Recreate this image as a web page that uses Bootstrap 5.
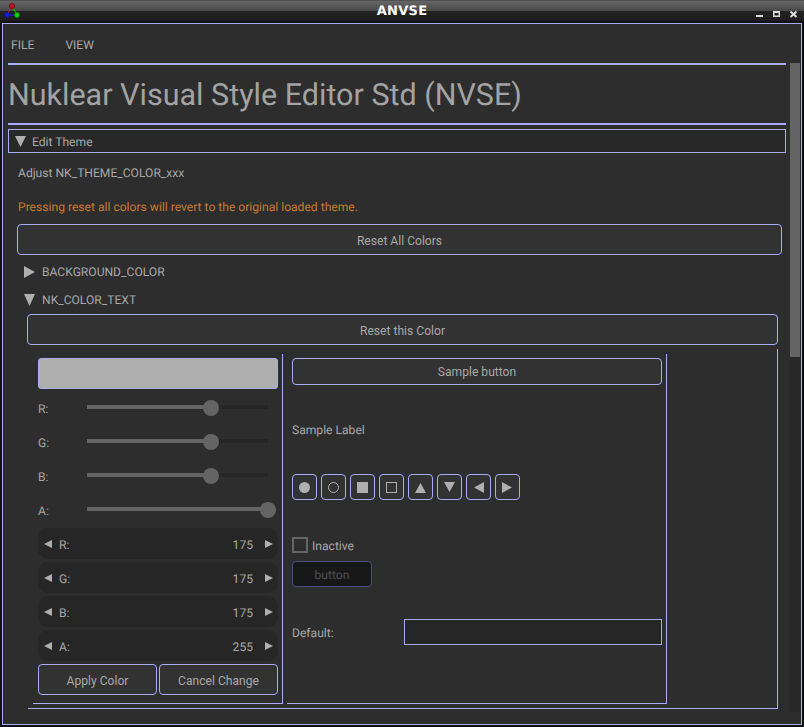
<!DOCTYPE html>
<html lang="en">
<head>
  <meta charset="UTF-8" />
  <title>ANVSE</title>
  <link href="https://cdn.jsdelivr.net/npm/bootstrap@5.3.0/dist/css/bootstrap.min.css" rel="stylesheet">
  <style>
    html, body { height: 100%; overflow: hidden; }
    body {
      background: #111;
      color: #a8a8a8;
      font-family: Roboto, "Liberation Sans", sans-serif;
      font-size: 12.1px;
      line-height: 14px;
      text-rendering: geometricPrecision;
    }
    .title-bar {
      height: 21px;
      background: linear-gradient(#3c3c3c 0, #666 1px, #484848 11px, #232323 11px, #1c1c1c 21px);
      margin-bottom: 2px;
    }
    .title-side { flex: 1 1 0; }
    .title-text {
      font-family: "DejaVu Sans", sans-serif;
      font-weight: 700;
      font-size: 13px;
      color: #fff;
      letter-spacing: .3px;
      padding-top: 2px;
    }
    .win-btns { margin-right: 7px; gap: 9px; padding-top: 7px; }
    .app-win {
      width: 800px;
      height: 702px;
      margin-left: 2px;
      border: 1px solid #aaf;
      background: #2d2d2d;
      padding-left: 5px;
    }
    .app-main { width: 778px; }
    .app-scroll {
      width: 10px;
      height: 649px;
      margin: 39px 0 0 4px;
      background: #282828;
    }
    .scroll-thumb { height: 294px; background: #646464; }
    .menu-row { height: 39px; padding: 3px 0 0 3px; gap: 31px; }
    .heavy-rule { height: 2px; background: #aaf; }
    .big-title {
      height: 58px;
      margin: 0;
      padding: 2px 0 0 0;
      font-size: 30.5px;
      font-weight: 400;
      line-height: 58px;
      color: #a3a3a3;
    }
    .tree-head {
      height: 24px;
      margin-top: 4px;
      padding-left: 6px;
      gap: 6px;
      border: 1px solid #aaf;
      background: #282828;
    }
    .line-20 { height: 20px; }
    .adjust-line { margin: 10px 0 14px 10px; }
    .warn-line { margin-left: 10px; color: #c87a32; }
    .nudge { padding-top: 2px; }
    .nk-btn {
      background: #323232;
      border: 1px solid #aaf;
      border-radius: 4px;
      color: #a8a8a8;
      font-size: 12.1px;
      line-height: 14px;
      padding: 2px 0 0;
      --bs-btn-hover-bg: #323232;
      --bs-btn-hover-color: #a8a8a8;
      --bs-btn-hover-border-color: #aaf;
    }
    .reset-all { height: 31px; width: 765px; margin: 7px 0 0 9px; }
    .tree-sub { margin-left: 16px; gap: 7px; }
    .sub-first { margin-top: 7px; }
    .sub-next { margin-top: 8px; }
    .reset-one { height: 31px; width: 751px; margin: 4px 0 0 19px; }
    .color-group {
      width: 750px;
      height: 360px;
      margin: 4px 0 0 20px;
      padding: 5px 0 0 5px;
      border-right: 1px solid #aaf;
      border-bottom: 1px solid #aaf;
    }
    .side-panel {
      height: 350px;
      padding: 4px 0 0 5px;
      border-right: 1px solid #aaf;
      border-bottom: 1px solid #aaf;
    }
    .picker-panel { width: 250px; margin-right: 4px; }
    .sample-panel { width: 380px; }
    .swatch {
      width: 240px;
      height: 31px;
      margin-bottom: 3px;
      background: #afafaf;
      border: 1px solid #aaf;
      border-radius: 3px;
    }
    .slider-row { width: 240px; height: 34px; }
    .slider-name { width: 49px; }
    .slider-track {
      position: relative;
      width: 181px;
      height: 4px;
      margin-top: -4px;
      background: #262626;
    }
    .slider-fill { height: 4px; background: #646464; }
    .slider-thumb {
      position: absolute;
      top: -5px;
      width: 16px;
      height: 16px;
      margin-left: -8px;
      border-radius: 50%;
      background: #646464;
    }
    .prop-list { width: 240px; gap: 3px; }
    .prop-row {
      height: 31px;
      padding: 0 5px 0 6px;
      background: #262626;
      border-radius: 10px;
    }
    .prop-name { margin-left: 7px; }
    .prop-value { margin-right: 12px; }
    .picker-actions { width: 240px; gap: 2px; margin-top: 3px; }
    .picker-actions .nk-btn { width: 119px; height: 31px; }
    .sample-btn { width: 370px; height: 27px; padding-top: 1px; }
    .sample-label { height: 20px; margin: 35px 0 34px; }
    .sym-row { gap: 4px; }
    .sym-btn { width: 25px; height: 26px; padding: 0; }
    .inactive-row { margin-top: 37px; gap: 4px; }
    .fake-check { width: 16px; height: 16px; border: 2px solid #646464; }
    .off-btn {
      width: 80px;
      height: 26px;
      margin-top: 8px;
      padding-top: 2px;
      background: #181818;
      border: 1px solid #4d4d80;
      border-radius: 4px;
      color: #505050;
    }
    .default-row { margin-top: 32px; }
    .default-name { width: 112px; }
    .default-input {
      width: 258px;
      height: 26px;
      background: #262626;
      border: 1px solid #aaf;
    }
    svg { display: block; flex: none; }
  </style>
</head>
<body>
  <div class="title-bar d-flex align-items-center">
    <div class="title-side d-flex align-items-center">
      <svg width="24" height="21" viewBox="0 0 24 21">
        <line x1="12" y1="6" x2="17" y2="15" stroke="#0c0"/>
        <line x1="7" y1="15" x2="17" y2="15" stroke="#22f"/>
        <line x1="12" y1="6" x2="7" y2="15" stroke="#d22"/>
        <circle cx="12" cy="6" r="2.5" fill="#c12" stroke="#611"/>
        <circle cx="7" cy="15" r="2.5" fill="#12e" stroke="#118"/>
        <circle cx="17" cy="15" r="2.5" fill="#1d1" stroke="#171"/>
      </svg>
    </div>
    <div class="title-text">ANVSE</div>
    <div class="title-side d-flex justify-content-end">
      <div class="win-btns d-flex">
        <svg width="8" height="8" viewBox="0 0 8 8"><rect x="0" y="5" width="7" height="2" fill="#ddd"/></svg>
        <svg width="7" height="8" viewBox="0 0 7 8"><rect x=".75" y="1.75" width="5.5" height="4.5" fill="none" stroke="#ddd" stroke-width="1.5"/><rect x="0" y="1" width="7" height="2" fill="#ddd"/></svg>
        <svg width="8" height="8" viewBox="0 0 8 8"><path d="M1.5 1.5l6 5.5M7.5 1.5l-6 5.5" stroke="#ddd" stroke-width="2" fill="none"/></svg>
      </div>
    </div>
  </div>

  <div class="app-win d-flex">
    <div class="app-main">
      <div class="menu-row d-flex align-items-center"><span>FILE</span><span>VIEW</span></div>
      <div class="heavy-rule"></div>
      <h1 class="big-title">Nuklear Visual Style Editor Std (NVSE)</h1>
      <div class="heavy-rule"></div>

      <div class="tree-head d-flex align-items-center">
        <svg width="11" height="11" viewBox="0 0 11 11"><polygon points="0,0 11,0 5.5,11" fill="#afafaf"/></svg>
        <span class="nudge">Edit Theme</span>
      </div>
      <div class="line-20 adjust-line d-flex align-items-center">Adjust NK_THEME_COLOR_xxx</div>
      <div class="line-20 warn-line d-flex align-items-center">Pressing reset all colors will revert to the original loaded theme.</div>
      <button type="button" class="btn nk-btn reset-all d-block">Reset All Colors</button>

      <div class="line-20 tree-sub sub-first d-flex align-items-center">
        <svg width="11" height="12" viewBox="0 0 11 12"><polygon points="0,0 11,6 0,12" fill="#afafaf"/></svg>
        <span>BACKGROUND_COLOR</span>
      </div>
      <div class="line-20 tree-sub sub-next d-flex align-items-center">
        <svg width="11" height="12" viewBox="0 0 11 12"><polygon points="0,0 11,0 5.5,12" fill="#afafaf"/></svg>
        <span>NK_COLOR_TEXT</span>
      </div>
      <button type="button" class="btn nk-btn reset-one d-block">Reset this Color</button>

      <div class="color-group d-flex">
        <div class="side-panel picker-panel">
          <div class="swatch"></div>
          <div class="slider-row d-flex align-items-center">
            <span class="slider-name">R:</span>
            <div class="slider-track"><div class="slider-fill" style="width:68.5%"></div><div class="slider-thumb" style="left:68.5%"></div></div>
          </div>
          <div class="slider-row d-flex align-items-center">
            <span class="slider-name">G:</span>
            <div class="slider-track"><div class="slider-fill" style="width:68.5%"></div><div class="slider-thumb" style="left:68.5%"></div></div>
          </div>
          <div class="slider-row d-flex align-items-center">
            <span class="slider-name">B:</span>
            <div class="slider-track"><div class="slider-fill" style="width:68.5%"></div><div class="slider-thumb" style="left:68.5%"></div></div>
          </div>
          <div class="slider-row d-flex align-items-center">
            <span class="slider-name">A:</span>
            <div class="slider-track"><div class="slider-fill" style="width:100%"></div><div class="slider-thumb" style="left:100%"></div></div>
          </div>
          <div class="prop-list d-flex flex-column">
            <div class="prop-row d-flex align-items-center">
              <svg width="8" height="8" viewBox="0 0 8 8"><polygon points="8,0 0,4 8,8" fill="#afafaf"/></svg>
              <span class="prop-name nudge">R:</span><span class="prop-value ms-auto nudge">175</span>
              <svg width="8" height="8" viewBox="0 0 8 8"><polygon points="0,0 8,4 0,8" fill="#afafaf"/></svg>
            </div>
            <div class="prop-row d-flex align-items-center">
              <svg width="8" height="8" viewBox="0 0 8 8"><polygon points="8,0 0,4 8,8" fill="#afafaf"/></svg>
              <span class="prop-name nudge">G:</span><span class="prop-value ms-auto nudge">175</span>
              <svg width="8" height="8" viewBox="0 0 8 8"><polygon points="0,0 8,4 0,8" fill="#afafaf"/></svg>
            </div>
            <div class="prop-row d-flex align-items-center">
              <svg width="8" height="8" viewBox="0 0 8 8"><polygon points="8,0 0,4 8,8" fill="#afafaf"/></svg>
              <span class="prop-name nudge">B:</span><span class="prop-value ms-auto nudge">175</span>
              <svg width="8" height="8" viewBox="0 0 8 8"><polygon points="0,0 8,4 0,8" fill="#afafaf"/></svg>
            </div>
            <div class="prop-row d-flex align-items-center">
              <svg width="8" height="8" viewBox="0 0 8 8"><polygon points="8,0 0,4 8,8" fill="#afafaf"/></svg>
              <span class="prop-name nudge">A:</span><span class="prop-value ms-auto nudge">255</span>
              <svg width="8" height="8" viewBox="0 0 8 8"><polygon points="0,0 8,4 0,8" fill="#afafaf"/></svg>
            </div>
          </div>
          <div class="picker-actions d-flex">
            <button type="button" class="btn nk-btn">Apply Color</button>
            <button type="button" class="btn nk-btn">Cancel Change</button>
          </div>
        </div>

        <div class="side-panel sample-panel">
          <button type="button" class="btn nk-btn sample-btn d-block">Sample button</button>
          <div class="sample-label d-flex align-items-center">Sample Label</div>
          <div class="sym-row d-flex">
            <button type="button" class="btn nk-btn sym-btn d-flex align-items-center justify-content-center"><svg width="11" height="12" viewBox="0 0 11 12"><circle cx="5.5" cy="6.5" r="5.5" fill="#afafaf"/></svg></button>
            <button type="button" class="btn nk-btn sym-btn d-flex align-items-center justify-content-center"><svg width="11" height="12" viewBox="0 0 11 12"><circle cx="5.5" cy="6.5" r="5" fill="none" stroke="#afafaf"/></svg></button>
            <button type="button" class="btn nk-btn sym-btn d-flex align-items-center justify-content-center"><svg width="11" height="12" viewBox="0 0 11 12"><rect x="0" y="1" width="11" height="11" fill="#afafaf"/></svg></button>
            <button type="button" class="btn nk-btn sym-btn d-flex align-items-center justify-content-center"><svg width="11" height="12" viewBox="0 0 11 12"><rect x=".5" y="1.5" width="10" height="10" fill="none" stroke="#afafaf"/></svg></button>
            <button type="button" class="btn nk-btn sym-btn d-flex align-items-center justify-content-center"><svg width="11" height="12" viewBox="0 0 11 12"><polygon points="5.5,2 11,12 0,12" fill="#afafaf"/></svg></button>
            <button type="button" class="btn nk-btn sym-btn d-flex align-items-center justify-content-center"><svg width="11" height="12" viewBox="0 0 11 12"><polygon points="0,1 11,1 5.5,11" fill="#afafaf"/></svg></button>
            <button type="button" class="btn nk-btn sym-btn d-flex align-items-center justify-content-center"><svg width="11" height="12" viewBox="0 0 11 12"><polygon points="11,1 11,12 1,6.5" fill="#afafaf"/></svg></button>
            <button type="button" class="btn nk-btn sym-btn d-flex align-items-center justify-content-center"><svg width="11" height="12" viewBox="0 0 11 12"><polygon points="0,1 0,12 10,6.5" fill="#afafaf"/></svg></button>
          </div>
          <div class="inactive-row d-flex align-items-center">
            <div class="fake-check"></div><span class="nudge">Inactive</span>
          </div>
          <div class="off-btn d-flex align-items-center justify-content-center">button</div>
          <div class="default-row d-flex align-items-center">
            <span class="default-name nudge">Default:</span>
            <div class="default-input"></div>
          </div>
        </div>
      </div>
    </div>
    <div class="app-scroll"><div class="scroll-thumb"></div></div>
  </div>
  <script src="https://cdn.jsdelivr.net/npm/bootstrap@5.3.0/dist/js/bootstrap.bundle.min.js"></script>
</body>
</html>
